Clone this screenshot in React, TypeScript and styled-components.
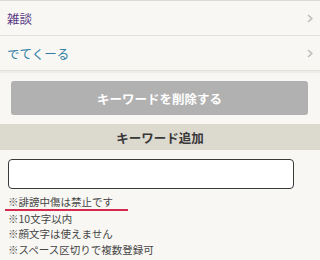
import React from "react";
import styled, { createGlobalStyle } from "styled-components";

const GlobalStyle = createGlobalStyle`
  body {
    margin: 0;
    background: #f8f7f3;
    font-family: "Noto Sans CJK JP", "Noto Sans", sans-serif;
  }
`;

const Wrapper = styled.section`
  width: 320px;
  display: flex;
  flex-direction: column;
`;

const List = styled.ul`
  list-style: none;
  margin: 0;
  padding: 0;
  border-top: 1px solid #dcdad5;
  border-bottom: 2px solid #eeece7;
`;

const Row = styled.li<{ $color: string }>`
  height: 34px;
  display: flex;
  align-items: center;
  justify-content: space-between;
  padding: 0 7px 0 7px;
  border-bottom: 1px solid #e2e0da;
  font-size: 12.5px;
  color: ${(props) => props.$color};
`;

const ButtonArea = styled.div`
  padding: 8px 12px 9px 11px;
`;

const DeleteButton = styled.button`
  width: 100%;
  height: 34px;
  border: none;
  border-radius: 3px;
  background: #b1b1b1;
  color: #fff;
  font-family: inherit;
  font-size: 12.5px;
  font-weight: bold;
`;

const Heading = styled.h2`
  margin: 0;
  height: 26px;
  display: flex;
  align-items: center;
  justify-content: center;
  background: #dcd9cf;
  color: #383838;
  font-size: 12.5px;
  font-weight: bold;
`;

const Form = styled.form`
  display: flex;
  flex-direction: column;
  padding: 9px 26px 0 8px;
`;

const Input = styled.input`
  box-sizing: border-box;
  width: 286px;
  height: 30px;
  border: 1.5px solid #3a3a3a;
  border-radius: 4px;
  background: #fff;
`;

const Notes = styled.ul`
  list-style: none;
  margin: 6px 0 0;
  padding: 0;
`;

const Note = styled.li<{ $marked?: boolean }>`
  font-size: 10.5px;
  line-height: ${(props) => (props.$marked ? "13.5px" : "15.5px")};
  color: #464646;
  ${(props) =>
    props.$marked &&
    `
    width: 120px;
    margin-left: -3px;
    padding-left: 3px;
    border-bottom: 2px solid #d42a4e;
  `}
`;

const Chevron = () => (
  <svg width="6" height="9" viewBox="0 0 6 9">
    <polyline
      points="1,1 4.8,4.5 1,8"
      fill="none"
      stroke="#bdbdbd"
      strokeWidth="1.6"
    />
  </svg>
);

const App = () => {
  return (
    <Wrapper>
      <GlobalStyle />
      <List>
        <Row $color="#5a3a86">
          雑談
          <Chevron />
        </Row>
        <Row $color="#2c7ca3">
          でてくーる
          <Chevron />
        </Row>
      </List>
      <ButtonArea>
        <DeleteButton>キーワードを削除する</DeleteButton>
      </ButtonArea>
      <Heading>キーワード追加</Heading>
      <Form>
        <Input />
        <Notes>
          <Note $marked>※誹謗中傷は禁止です</Note>
          <Note>※10文字以内</Note>
          <Note>※顔文字は使えません</Note>
          <Note>※スペース区切りで複数登録可</Note>
        </Notes>
      </Form>
    </Wrapper>
  );
};

export default App;
